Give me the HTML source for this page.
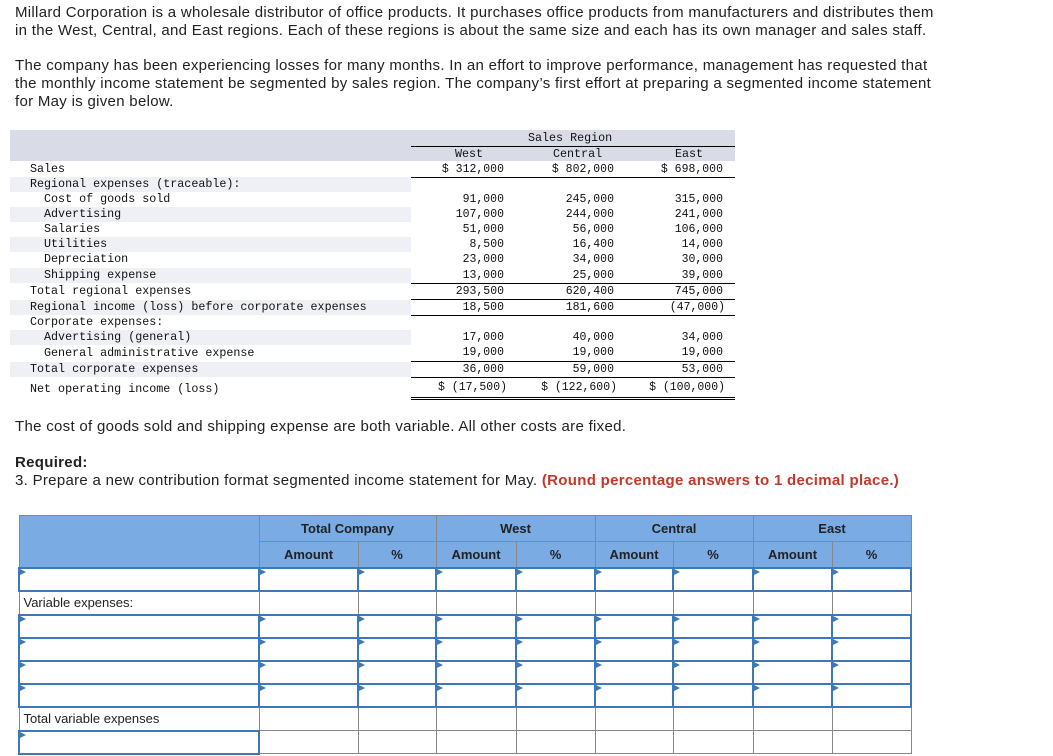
<!DOCTYPE html>
<html><head><meta charset="utf-8"><style>
body{margin:0;width:1053px;height:756px;overflow:hidden;background:#fff;font-family:"Liberation Sans",Arial,sans-serif;color:#222;position:relative}
p{position:absolute;left:15px;margin:0;font-size:15px;letter-spacing:0.3px;line-height:18px;width:935px}
.m{position:absolute;font-family:"Liberation Mono",monospace;font-size:11.7px;line-height:15px;white-space:pre;color:#111}
.s{position:absolute;left:10px;width:401px;background:#eff0f5;height:15px}
.ln{position:absolute;height:1px;background:#000}
.n{position:absolute;font-family:"Liberation Mono",monospace;font-size:11.5px;line-height:15px;text-align:right;white-space:pre;color:#111}
table{position:absolute;left:18px;top:515px;border-collapse:collapse;font-size:13px;table-layout:fixed}
td{border:1px solid #888;padding:0;box-sizing:border-box}
.h td{background:#7aabe2;text-align:center;font-weight:bold;color:#222;height:26px}
.in td{border:2px solid #3e78b8;position:relative;height:23px}
.in td:before{content:"";position:absolute;left:0;top:0;border-left:6px solid #3e78b8;border-top:3px solid transparent;border-bottom:3px solid transparent}
.lr td{height:24px}
.in td.pl{border:1px solid #888}
.in td.pl:before{display:none}
.lb{padding-left:4px}
</style></head><body>
<p style="top:4px">Millard Corporation is a wholesale distributor of office products. It purchases office products from manufacturers and distributes them in the West, Central, and East regions. Each of these regions is about the same size and each has its own manager and sales staff.</p>
<p style="top:57px">The company has been experiencing losses for many months. In an effort to improve performance, management has requested that the monthly income statement be segmented by sales region. The company’s first effort at preparing a segmented income statement for May is given below.</p>

<div style="position:absolute;left:10px;top:130px;width:725px;height:31px;background:#d9dce7"></div>
<div class="m" style="left:528px;top:131px">Sales Region</div>
<div class="ln" style="left:411px;top:146px;width:324px"></div>
<div class="m" style="left:455px;top:147px">West</div>
<div class="m" style="left:553px;top:147px">Central</div>
<div class="m" style="left:675px;top:147px">East</div>

<div class="s" style="top:177px"></div>
<div class="s" style="top:207px"></div>
<div class="s" style="top:237px"></div>
<div class="s" style="top:268px"></div>
<div class="s" style="top:300px"></div>
<div class="s" style="top:330px"></div>
<div class="s" style="top:362px"></div>

<div class="m" style="left:30px;top:162px">Sales
Regional expenses (traceable):
  Cost of goods sold
  Advertising
  Salaries
  Utilities
  Depreciation</div>
<div class="m" style="left:30px;top:268px">  Shipping expense</div>
<div class="m" style="left:30px;top:284px">Total regional expenses</div>
<div class="m" style="left:30px;top:300px">Regional income (loss) before corporate expenses</div>
<div class="m" style="left:30px;top:315px">Corporate expenses:
  Advertising (general)</div>
<div class="m" style="left:30px;top:346px">  General administrative expense</div>
<div class="m" style="left:30px;top:362px">Total corporate expenses</div>
<div class="m" style="left:30px;top:382px">Net operating income (loss)</div>

<div class="n" style="left:411px;width:93px;top:162px">$ 312,000</div>
<div class="n" style="left:518px;width:96px;top:162px">$ 802,000</div>
<div class="n" style="left:628px;width:95px;top:162px">$ 698,000</div>
<div class="n" style="left:411px;width:93px;top:192px">91,000
107,000
51,000
8,500
23,000</div>
<div class="n" style="left:518px;width:96px;top:192px">245,000
244,000
56,000
16,400
34,000</div>
<div class="n" style="left:628px;width:95px;top:192px">315,000
241,000
106,000
14,000
30,000</div>
<div class="n" style="left:411px;width:93px;top:268px">13,000</div><div class="n" style="left:518px;width:96px;top:268px">25,000</div><div class="n" style="left:628px;width:95px;top:268px">39,000</div>
<div class="n" style="left:411px;width:93px;top:284px">293,500</div><div class="n" style="left:518px;width:96px;top:284px">620,400</div><div class="n" style="left:628px;width:95px;top:284px">745,000</div>
<div class="n" style="left:411px;width:93px;top:300px">18,500</div><div class="n" style="left:518px;width:96px;top:300px">181,600</div><div class="n" style="left:628px;width:97px;top:300px">(47,000)</div>
<div class="n" style="left:411px;width:93px;top:330px">17,000
19,000</div><div class="n" style="left:518px;width:96px;top:330px">40,000
19,000</div><div class="n" style="left:628px;width:95px;top:330px">34,000
19,000</div>
<div class="n" style="left:411px;width:93px;top:362px">36,000</div><div class="n" style="left:518px;width:96px;top:362px">59,000</div><div class="n" style="left:628px;width:95px;top:362px">53,000</div>
<div class="n" style="left:411px;width:96px;top:380px">$ (17,500)</div><div class="n" style="left:518px;width:99px;top:380px">$ (122,600)</div><div class="n" style="left:628px;width:97px;top:380px">$ (100,000)</div>

<div class="ln" style="left:411px;top:177px;width:324px"></div>
<div class="ln" style="left:411px;top:283px;width:324px"></div>
<div class="ln" style="left:411px;top:299px;width:324px"></div>
<div class="ln" style="left:411px;top:315px;width:324px"></div>
<div class="ln" style="left:411px;top:361px;width:324px"></div>
<div class="ln" style="left:411px;top:377px;width:324px"></div>
<div class="ln" style="left:411px;top:397px;width:324px"></div>
<div class="ln" style="left:411px;top:399px;width:324px"></div>

<p style="top:418px">The cost of goods sold and shipping expense are both variable. All other costs are fixed.</p>
<p style="top:454px;font-weight:bold">Required:</p>
<p style="top:472px;width:1030px">3. Prepare a new contribution format segmented income statement for May. <b style="color:#c0392b">(Round percentage answers to 1 decimal place.)</b></p>

<table style="width:892px">
<colgroup><col style="width:240px"><col style="width:99px"><col style="width:78px"><col style="width:80px"><col style="width:79px"><col style="width:78px"><col style="width:80px"><col style="width:79px"><col style="width:79px"></colgroup>
<tr class="h"><td rowspan="2"></td><td colspan="2">Total Company</td><td colspan="2">West</td><td colspan="2">Central</td><td colspan="2">East</td></tr>
<tr class="h"><td>Amount</td><td>%</td><td>Amount</td><td>%</td><td>Amount</td><td>%</td><td>Amount</td><td>%</td></tr>
<tr class="in"><td></td><td></td><td></td><td></td><td></td><td></td><td></td><td></td><td></td></tr>
<tr class="lr"><td class="lb">Variable expenses:</td><td></td><td></td><td></td><td></td><td></td><td></td><td></td><td></td></tr>
<tr class="in"><td></td><td></td><td></td><td></td><td></td><td></td><td></td><td></td><td></td></tr>
<tr class="in"><td></td><td></td><td></td><td></td><td></td><td></td><td></td><td></td><td></td></tr>
<tr class="in"><td></td><td></td><td></td><td></td><td></td><td></td><td></td><td></td><td></td></tr>
<tr class="in"><td></td><td></td><td></td><td></td><td></td><td></td><td></td><td></td><td></td></tr>
<tr class="lr"><td class="lb">Total variable expenses</td><td></td><td></td><td></td><td></td><td></td><td></td><td></td><td></td></tr>
<tr class="in"><td></td><td class="pl"></td><td class="pl"></td><td class="pl"></td><td class="pl"></td><td class="pl"></td><td class="pl"></td><td class="pl"></td><td class="pl"></td></tr>
</table>
</body></html>
